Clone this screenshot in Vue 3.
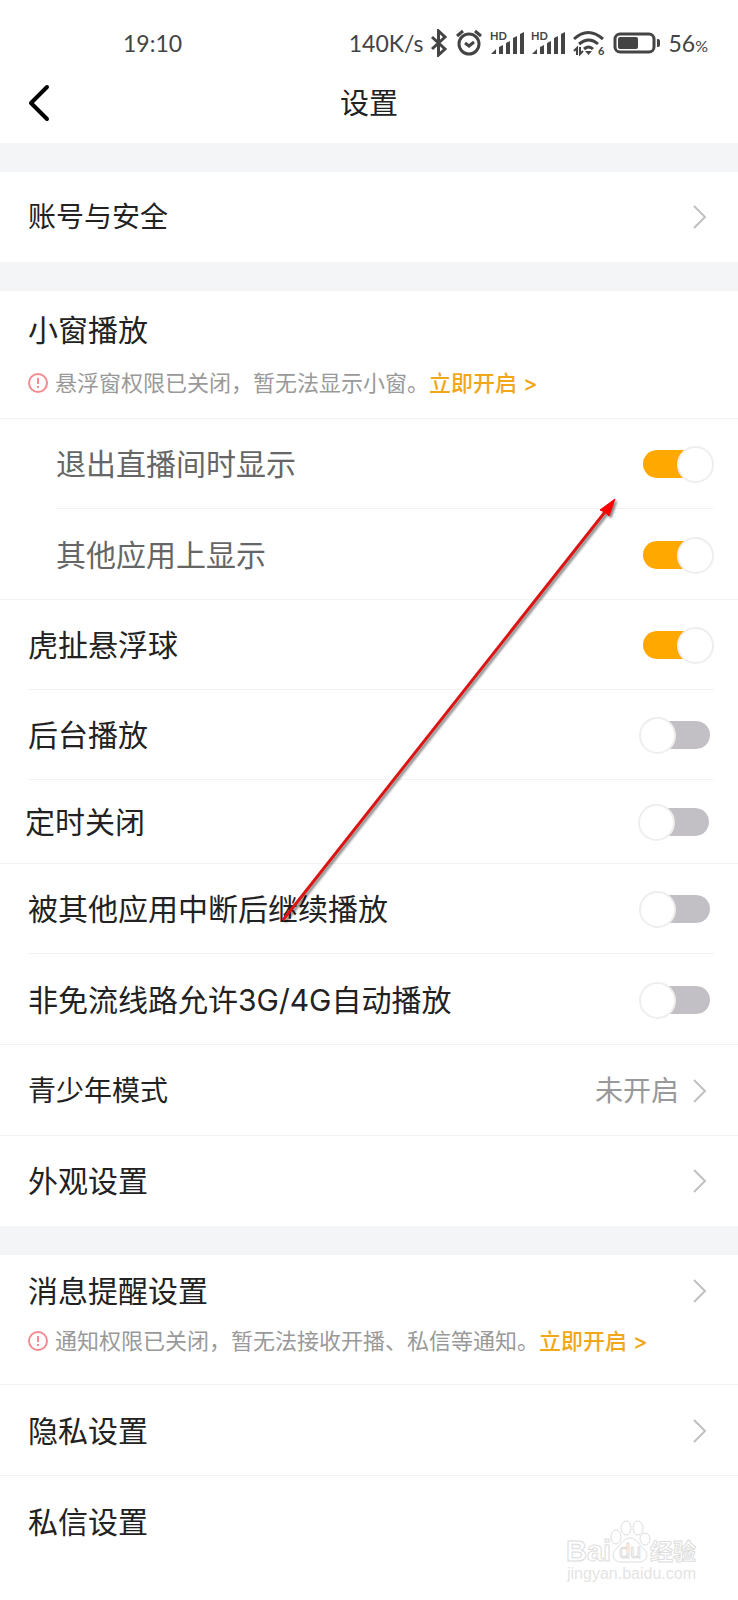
<script setup>
import { reactive } from 'vue'

const sections = reactive([
  [{ label: '账号与安全', size: 'sm', kind: 'link', last: true }],
  [
    { label: '小窗播放', kind: 'plain', hint: '悬浮窗权限已关闭，暂无法显示小窗。' },
    { label: '退出直播间时显示', kind: 'switch', on: true, sub: true, line: 'both' },
    { label: '其他应用上显示', kind: 'switch', on: true, sub: true },
    { label: '虎扯悬浮球', kind: 'switch', on: true, line: 'both' },
    { label: '后台播放', kind: 'switch', on: false, line: 'both' },
    { label: '定时关闭', kind: 'switch', on: false, short: true },
    { label: '被其他应用中断后继续播放', kind: 'switch', on: false, line: 'both' },
    { label: '非免流线路允许3G/4G自动播放', kind: 'switch', on: false },
    { label: '青少年模式', size: 'sm', kind: 'link', value: '未开启' },
    { label: '外观设置', kind: 'link', last: true }
  ],
  [
    { label: '消息提醒设置', kind: 'link', hint: '通知权限已关闭，暂无法接收开播、私信等通知。' },
    { label: '隐私设置', kind: 'link' },
    { label: '私信设置', kind: 'plain', line: 'none' },
    { label: '允许谁发私信', kind: 'value', value: '未关注', size: 'sm', line: 'tall' }
  ]
])
</script>

<template>
  <div class="page">
    <div class="status">
      <span class="time">19:10</span>
      <div class="indicators">
        <span>140K/s</span>
        <svg class="bt" width="18" height="28" viewBox="0 0 18 28"><path d="M2 8l13 12-6.500 6V2L15 8 2 20" /></svg>
        <svg class="alarm" width="28" height="28" viewBox="0 0 28 28"><circle cx="14" cy="15" r="10" /><path d="M10 14l4 3 5-4M2 7l6-5M26 7l-6-5" /></svg>
        <svg v-for="n in 2" :key="n" class="signal" width="34" height="28" viewBox="0 0 34 28">
          <text x="0" y="11">HD</text>
          <path d="M1 25l5-5v5zM9 18l4-2v9H9zM16 14l4-2v13h-4zM23 9l4-2v18h-4zM30 5l4-2v22h-4z" />
        </svg>
        <svg class="wifi" width="34" height="28" viewBox="0 0 34 28">
          <path class="arc" d="M2 10q14-13 29 0M7 15q10-8 19 0M12 20q5-4 9 0" />
          <path d="M13 22h7l-3.500 4z" />
          <path class="updown" d="M5 26v-7l-3 3M8 18v7l3-3" />
          <text x="26" y="26">6</text>
        </svg>
        <svg class="battery" width="48" height="24" viewBox="0 0 48 24"><rect class="case" x="2" y="3" width="39" height="18" rx="5" /><rect x="5" y="6" width="20" height="12" rx="2" /><path d="M44 8h1a2 2 0 0 1 2 2v4a2 2 0 0 1-2 2h-1z" /></svg>
        <span>56<small>%</small></span>
      </div>
    </div>
    <header class="header">
      <button class="back" type="button" aria-label="返回">
        <svg width="24" height="40" viewBox="0 0 24 40"><path d="M20 4L4 20l16 16" /></svg>
      </button>
      <h1>设置</h1>
    </header>

    <main>
      <section v-for="(rows, s) in sections" :key="s" class="group">
        <div
          v-for="row in rows"
          :key="row.label"
          class="row"
          :class="[row.size, row.line, { sub: row.sub, short: row.short, last: row.last, hinted: row.hint, linked: row.kind === 'link' }]"
        >
          <component :is="row.kind === 'switch' ? 'label' : row.kind === 'link' ? 'a' : 'div'" class="item" :href="row.kind === 'link' ? '#' : null">
            <span class="label">{{ row.label }}</span>
            <span v-if="row.value" class="value">{{ row.value }}</span>
            <svg v-if="row.kind === 'link'" class="chevron" width="14" height="26" viewBox="0 0 14 26"><path d="M1 2l11 11L1 24" /></svg>
            <input v-if="row.kind === 'switch'" v-model="row.on" type="checkbox" class="switch" />
          </component>
          <p v-if="row.hint" class="hint">
            <svg width="20" height="20" viewBox="0 0 20 20"><circle cx="10" cy="10" r="9" /><path d="M10 5v6M10 13v2" /></svg>
            <span>{{ row.hint }}</span><a href="#">立即开启 &gt;</a>
          </p>
        </div>
      </section>
    </main>

    <svg class="arrow" width="360" height="440" viewBox="0 0 360 440" aria-hidden="true">
      <path class="shaft" d="M16 430L338 22" />
      <path class="head" d="M348 9l-6 17-4-4-5-2z" />
    </svg>

    <svg class="watermark" width="140" height="68" viewBox="0 0 140 68" aria-hidden="true">
      <g class="mark">
        <ellipse cx="50" cy="17" rx="5" ry="7" />
        <ellipse cx="60" cy="8" rx="5" ry="7" />
        <ellipse cx="72" cy="8" rx="5" ry="7" />
        <ellipse cx="79" cy="19" rx="5" ry="6" />
        <path d="M64 18c-7 0-9 7-14 11-6 6-2 13 5 13h18c7 0 11-7 5-13-5-4-7-11-14-11z" />
        <text x="0" y="41" class="big">Bai</text>
        <text x="53" y="38" class="du">du</text>
        <text x="84" y="40" class="cn">经验</text>
      </g>
      <text x="1" y="59" class="url">jingyan.baidu.com</text>
    </svg>
  </div>
</template>

<style>
body {
  margin: 0;
}
</style>

<style scoped>
.page {
  position: relative;
  height: 100vh;
  overflow: hidden;
  background: #fff;
  color: #222;
  font-family: Inter, "Noto Sans CJK SC", sans-serif;
}

.status {
  display: flex;
  align-items: center;
  justify-content: space-between;
  height: 68px;
  padding: 18px 30px 0 123px;
  box-sizing: border-box;
  color: #444;
  font-family: Lato, "Noto Sans", sans-serif;
  font-size: 23px;
}

.indicators {
  display: flex;
  align-items: center;
  gap: 7px;
}

.indicators small {
  font-size: 16px;
}

.indicators svg {
  fill: #444;
}

.bt path,
.alarm circle,
.alarm path,
.wifi .arc,
.wifi .updown,
.battery .case {
  fill: none;
  stroke: #444;
  stroke-width: 3;
}

.wifi .updown {
  stroke-width: 2;
}

.signal text,
.wifi text {
  font-size: 11px;
  font-weight: 700;
}

.header {
  display: grid;
  grid-template-columns: 80px 1fr 80px;
  align-items: center;
  height: 75px;
}

.back {
  display: flex;
  padding: 0 0 5px 27px;
  border: 0;
  background: none;
}

.back path {
  fill: none;
  stroke: #000;
  stroke-width: 4;
  stroke-linecap: round;
  stroke-linejoin: round;
}

h1 {
  margin: 0;
  padding-bottom: 4px;
  text-align: center;
  font-size: 29px;
  font-weight: 400;
  line-height: 44px;
}

.group {
  border-top: 29px solid #f4f5f7;
}

.row {
  position: relative;
  padding: 0 28px;
}

.row::after {
  content: "";
  position: absolute;
  right: 0;
  bottom: 0;
  left: 0;
  height: 1px;
  background: #f2f2f2;
}

.row.both::after {
  right: 24px;
  left: 28px;
}

.row.sub.both::after {
  left: 56px;
}

.row.last::after,
.row.none::after {
  display: none;
}

.item {
  display: flex;
  align-items: center;
  height: 91px;
  color: inherit;
  text-decoration: none;
}

.both .item,
.last .item {
  height: 90px;
}

.short .item {
  height: 84px;
}

.tall .item {
  height: 98px;
}

.label,
.value {
  line-height: 44px;
}

.label {
  flex: 1;
  font-size: 30px;
}

.sm .label,
.value {
  font-size: 28px;
}

.sub {
  padding-left: 56px;
}

.sub .label {
  color: #666;
}

.short {
  padding: 0 29px 0 25px;
}

.value {
  margin-right: 14px;
  color: #999;
}

.chevron {
  margin-right: 3px;
}

.chevron path {
  fill: none;
  stroke: #c0c0c0;
  stroke-width: 2;
}

.switch {
  position: relative;
  width: 75px;
  height: 28px;
  margin: 0 -4px 0 0;
  box-sizing: border-box;
  border: 0 solid transparent;
  border-width: 0 4px;
  border-radius: 18px / 14px;
  appearance: none;
  background: #c2c0c5 padding-box;
}

.switch::before {
  content: "";
  position: absolute;
  top: -4px;
  left: -4px;
  width: 37px;
  height: 37px;
  box-sizing: border-box;
  border: 2px solid #eee;
  border-radius: 50%;
  background: #fff;
}

.switch:checked {
  background-color: #ffa800;
}

.switch:checked::before {
  right: -4px;
  left: auto;
}

.hinted .item {
  height: 78px;
}

.hinted.linked .item {
  height: 72px;
}

.hint {
  display: flex;
  align-items: center;
  height: 28px;
  margin: 0;
  padding-bottom: 22px;
  color: #999;
  font-size: 22px;
  line-height: 28px;
  white-space: nowrap;
}

.linked .hint {
  padding-bottom: 30px;
}

.hint svg {
  margin-right: 7px;
  fill: none;
  stroke: #f58b90;
  stroke-width: 2;
}

.hint a {
  color: #f0a818;
  font-weight: 500;
  text-decoration: none;
}

.arrow {
  position: absolute;
  top: 490px;
  left: 267px;
  pointer-events: none;
  filter: drop-shadow(2px 2px 1px #0007);
}

.shaft {
  stroke: #dc1414;
  stroke-width: 3;
}

.head {
  fill: #f00;
  stroke: #f00;
}

.watermark {
  position: absolute;
  right: 32px;
  bottom: 12px;
  pointer-events: none;
  font-family: "Liberation Sans", "Noto Sans CJK SC", sans-serif;
}

.mark {
  fill: #fff;
  stroke: #ddd;
  stroke-width: 1;
}

.big {
  font-size: 29px;
  font-weight: 700;
}

.du {
  font-size: 20px;
}

.cn {
  font-size: 23px;
  font-weight: 700;
}

.url {
  fill: #e4e4e4;
  font-size: 16px;
}
</style>
